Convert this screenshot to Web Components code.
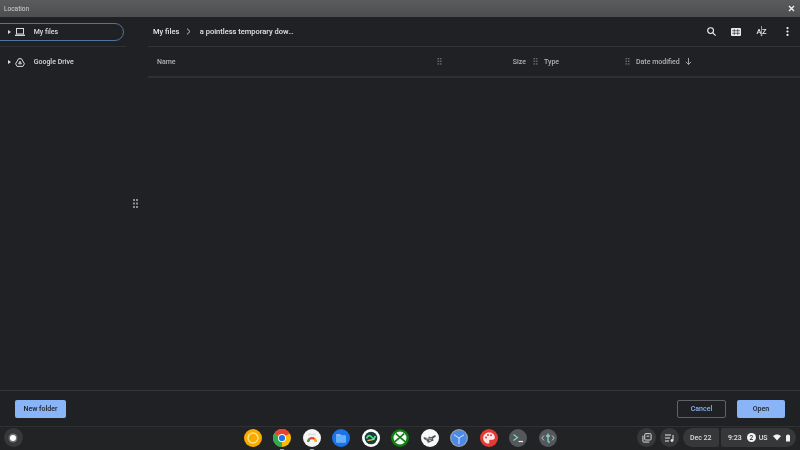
<!DOCTYPE html>
<html>
<head>
<meta charset="utf-8">
<title>Location</title>
<style>
    html, body { margin: 0; height: 100%; background: #202124; overflow: hidden; }
    /* the reference is a scaled down capture, slightly soft everywhere */
    body { display: flex; flex-direction: column; width: 800px; height: 450px; font-family: Roboto, "Liberation Sans", sans-serif; filter: blur(.3px); }
</style>
</head>
<body>
<file-dialog>
    <dialog-titlebar slot="title">Location</dialog-titlebar>
    <nav-tree slot="nav"></nav-tree>
    <file-toolbar slot="toolbar"></file-toolbar>
    <file-columns slot="columns"></file-columns>
    <dialog-footer slot="footer"></dialog-footer>
</file-dialog>
<chrome-shelf></chrome-shelf>

<script>
const gripDots = `<svg width="5" height="7" viewBox="0 0 5 7" fill="#65676b"><rect x=".5" y="0" width="1.6" height="1.4"/><rect x="2.900" y="0" width="1.6" height="1.4"/><rect x=".5" y="2.6" width="1.6" height="1.4"/><rect x="2.900" y="2.6" width="1.6" height="1.4"/><rect x=".5" y="5.2" width="1.6" height="1.4"/><rect x="2.900" y="5.2" width="1.6" height="1.4"/></svg>`

class FileDialog extends HTMLElement {
    constructor() {
        super()
        this.attachShadow({ mode: 'open' }).innerHTML = `
        <style>
            :host { display: flex; flex-direction: column; height: 426px; flex: none; background: #202124; }
            .main { flex: 1; display: flex; min-height: 0; }
            .side { width: 124px; flex: none; }
            .split { width: 24px; flex: none; box-sizing: border-box; padding-right: 2px; display: flex; align-items: center; justify-content: center; }
            .content { flex: 1; min-width: 0; display: flex; flex-direction: column; }
        </style>
        <slot name="title"></slot>
        <div class="main">
            <div class="side"><slot name="nav"></slot></div>
            <div class="split"><svg width="5" height="9" viewBox="0 0 5 9" fill="#8a8c8f"><rect width="2" height="2"/><rect x="3" width="2" height="2"/><rect y="3.500" width="2" height="2"/><rect x="3" y="3.500" width="2" height="2"/><rect y="7" width="2" height="2"/><rect x="3" y="7" width="2" height="2"/></svg></div>
            <div class="content">
                <slot name="toolbar"></slot>
                <slot name="columns"></slot>
            </div>
        </div>
        <slot name="footer"></slot>`
    }
}

class DialogTitlebar extends HTMLElement {
    constructor() {
        super()
        this.attachShadow({ mode: 'open' }).innerHTML = `
        <style>
            :host { display: flex; align-items: center; justify-content: space-between; height: 17px; flex: none;
                background: linear-gradient(#5a5b5c, #4d4e50); color: #d3d4d5; font-size: 6.5px; padding: 0 5px 0 4px; }
            svg { display: block; }
        </style>
        <span><slot></slot></span>
        <svg width="7" height="7" viewBox="0 0 7 7" stroke="#f1f3f4" stroke-width="1.3"><path d="M1 1 6 6M6 1 1 6"/></svg>`
    }
}

class NavTree extends HTMLElement {
    constructor() {
        super()
        this.attachShadow({ mode: 'open' }).innerHTML = `
        <style>
            :host { display: block; color: #dadbdd; font-size: 7px; font-weight: 500; }
            .row { height: 17px; display: flex; align-items: center; box-sizing: border-box; }
            .sel { height: 18px; margin-top: 6px; margin-left: -2px; border: 1px solid #51749f; border-radius: 0 10px 10px 0; padding-left: 8.5px; }
            .sep { height: 1px; background: #2f3033; margin: 5px -2px 0 0; }
            .drive { margin-top: 6.500px; padding-left: 7.500px; }
            .arrow { width: 0; height: 0; border-left: 3px solid #dadce0; border-top: 2.500px solid transparent; border-bottom: 2.500px solid transparent; margin-right: 4.500px; }
            svg { display: block; margin-right: 8.700px; flex: none; }
        </style>
        <div class="row sel"><i class="arrow"></i>
            <svg width="10" height="8" viewBox="0 0 10 8" fill="none" stroke="#dadce0"><rect x="1.500" y=".5" width="7" height="5.500"/><path d="M0 7.300h10" stroke-width="1.300"/></svg>
            <span>My files</span></div>
        <div class="sep"></div>
        <div class="row drive"><i class="arrow"></i>
            <svg width="10" height="9" viewBox="0 0 10 9" fill="none" stroke="#dadce0"><path d="M3.600.7h2.800l3 5.100-1.500 2.600H2.100L.6 5.800Z"/><path d="M5 3.200 6.400 5.800H3.600Z"/></svg>
            <span>Google Drive</span></div>`
    }
}

class FileToolbar extends HTMLElement {
    constructor() {
        super()
        this.attachShadow({ mode: 'open' }).innerHTML = `
        <style>
            :host { display: flex; align-items: center; height: 30px; flex: none; box-sizing: border-box; color: #e2e3e5; font-size: 7.5px; font-weight: 500; border-bottom: 1px solid #333438; padding: 0 11.500px 0 5px; }
            .chev { margin: 0 8.500px 0 7px; display: block; }
            .tools { margin-left: auto; display: flex; align-items: center; gap: 15.500px; }
            .az { position: relative; font-size: 7.5px; color: #e8eaed; width: 10px; text-align: center; letter-spacing: .6px; font-weight: 500; }
            .az svg { position: absolute; left: 3.600px; top: -1px; }
            .dots { margin-left: 3.500px; }
            svg { display: block; }
        </style>
        <span>My files</span>
        <svg class="chev" width="5" height="7" viewBox="0 0 5 7" fill="none" stroke="#c4c6c9"><path d="M1 .6 4 3.500 1 6.400"/></svg>
        <span>a pointless temporary dow…</span>
        <div class="tools">
            <svg width="9" height="9" viewBox="0 0 9 9" fill="none" stroke="#f1f3f4" stroke-width="1.100"><circle cx="3.600" cy="3.600" r="2.900"/><path d="M5.700 5.700 8.600 8.600"/></svg>
            <svg width="10" height="8" viewBox="0 0 10 8" fill="#e8eaed"><path d="M1 0h8a1 1 0 0 1 1 1v6a1 1 0 0 1-1 1H1a1 1 0 0 1-1-1V1a1 1 0 0 1 1-1Z"/><path d="M3.300 1v6M6.700 1v6M1 2.700h8M1 5.300h8" stroke="#202124" stroke-width=".6"/></svg>
            <span class="az">AZ<svg width="3" height="11" viewBox="0 0 3 11" fill="none" stroke="#e8eaed" stroke-width=".6"><path d="M1.500 0v10M.5 8.800l1 1.200 1-1.200"/></svg></span>
            <svg class="dots" width="3" height="9" viewBox="0 0 3 9" fill="#f1f3f4"><circle cx="1.500" cy="1.100" r="1.100"/><circle cx="1.500" cy="4.500" r="1.100"/><circle cx="1.500" cy="7.900" r="1.100"/></svg>
        </div>`
    }
}

class FileColumns extends HTMLElement {
    constructor() {
        super()
        this.attachShadow({ mode: 'open' }).innerHTML = `
        <style>
            :host { display: grid; grid-template-columns: 294px 96px 92px 1fr; height: 31px; flex: none; box-sizing: border-box;
                align-items: center; color: #b0b2b5; font-size: 7px; font-weight: 500; border-bottom: 2px solid #2f3033; }
            .c { display: flex; align-items: center; height: 100%; padding-right: .5px; }
            .name { padding-left: 9px; justify-content: space-between; }
            .size { justify-content: flex-end; gap: 6.500px; }
            .type { padding-left: 6px; justify-content: space-between; }
            .date { gap: 5px; padding-left: 6px; }
            svg { display: block; }
        </style>
        <div class="c name"><span>Name</span>${gripDots}</div>
        <div class="c size"><span>Size</span>${gripDots}</div>
        <div class="c type"><span>Type</span>${gripDots}</div>
        <div class="c date"><span>Date modified</span>
            <svg width="7" height="7" viewBox="0 0 7 8" fill="none" stroke="#b5b7ba"><path d="M3.500 0v7.400M.6 4.400l2.900 3 2.900-3"/></svg></div>`
    }
}

class DialogButton extends HTMLElement {
    constructor() {
        super()
        this.attachShadow({ mode: 'open' }).innerHTML = `
        <style>
            :host { display: flex; align-items: center; justify-content: center; width: 48px; height: 18px; box-sizing: border-box;
                border-radius: 2px; font-size: 7px; font-weight: 500; background: #8ab4f8; color: #202124; }
            :host([outline]) { background: transparent; color: #8ab4f8; border: 1px solid #5f6368; width: 49px; }
        </style>
        <slot></slot>`
    }
}

class DialogFooter extends HTMLElement {
    constructor() {
        super()
        this.attachShadow({ mode: 'open' }).innerHTML = `
        <style>
            :host { display: flex; align-items: center; gap: 11px; height: 36px; flex: none; box-sizing: border-box; border-top: 1px solid #35363a; padding: 0 15px; }
            .wide { width: 51px; }
            .push { margin-left: auto; }
        </style>
        <dialog-button class="wide">New folder</dialog-button>
        <dialog-button class="push" outline>Cancel</dialog-button>
        <dialog-button>Open</dialog-button>`
    }
}

const apps = [
    `<circle cx="9" cy="9" r="9" fill="#f9ab00"/><circle cx="9" cy="9" r="5" fill="#f9ab00" stroke="#fde293" stroke-width="1.400"/>`,
    `<circle cx="9" cy="9" r="9" fill="#fbbc04"/><path d="M9 9 1.200 4.500A9 9 0 0 1 16.800 4.500Z" fill="#ea4335"/><path d="M9 9 1.200 4.500A9 9 0 0 0 9 18Z" fill="#34a853"/><circle cx="9" cy="9" r="4" fill="#fff"/><circle cx="9" cy="9" r="3.100" fill="#1a73e8"/>`,
    `<circle cx="9" cy="9" r="9" fill="#f5f5f5"/><path d="M4 13a5 5 0 0 1 10 0h-2.200a2.800 2.800 0 0 0-5.600 0Z" fill="#ea4335"/><path d="M4 13a5 5 0 0 1 2-4l1.200 2a2.800 2.800 0 0 0-1 2Z" fill="#34a853"/><path d="M14 13a5 5 0 0 0-2-4l-1.200 2a2.800 2.800 0 0 1 1 2Z" fill="#fbbc04"/><rect x="5" y="4.500" width="8" height="2" fill="#e0e0e0"/>`,
    `<circle cx="9" cy="9" r="9" fill="#1a73e8"/><path d="M4 6a1 1 0 0 1 1-1h3l1.200 1.300H13a1 1 0 0 1 1 1V12.500a1 1 0 0 1-1 1H5a1 1 0 0 1-1-1Z" fill="#8ab4f8"/><rect x="4" y="7" width="10" height="6.500" rx="1" fill="#64b0f9"/>`,
    `<circle cx="9" cy="9" r="9" fill="#fff"/><circle cx="9" cy="9" r="6.300" fill="#1c3b37"/><path d="M4.500 9.500C6 6 8 6 9.500 8S12 10 13.500 7" fill="none" stroke="#3ddc84" stroke-width="1.800"/><path d="M5.500 11.500C7.500 11 10 11.500 12.500 10" fill="none" stroke="#fdd663" stroke-width="1.200"/>`,
    `<circle cx="9" cy="9" r="9" fill="#107c10"/><circle cx="9" cy="9" r="6.500" fill="#f4f4f4"/><path d="M4.800 4.600 9 8.300 13.200 4.600M3.600 12.800 9 8.300l5.400 4.500" fill="none" stroke="#107c10" stroke-width="1.600"/>`,
    `<circle cx="9" cy="9" r="9" fill="#f8f8f8"/><path d="M2.500 8 7 9.200l1-1.800 2 .8 4-2.200 1 1.600-3 1.800.5 2.400-2.500.6L7 14l-1-2.200-3-1.800Z" fill="#55575a"/><path d="M5 9.800h6M8 11.500h2" stroke="#fff" stroke-width=".6"/>`,
    `<circle cx="9" cy="9" r="9" fill="#9aa0a6"/><circle cx="9" cy="9" r="7.800" fill="#4d8ae8"/><path d="M9 9V15M9 9 4 5.800M9 9l5-3.200" stroke="#e8f0fe" stroke-width=".9"/>`,
    `<circle cx="9" cy="9" r="9" fill="#e53935"/><path d="M9 3.500C5.500 3.500 3.200 6 3.200 9c0 3 2.300 5.500 5 5.500 1.500 0 1.400-1.200 1-2-.4-1 .3-1.700 1.300-1.700h2c1.300 0 2.300-1 2.300-2.300C14.800 5.500 12.300 3.500 9 3.500Z" fill="#fce8e6"/><circle cx="6" cy="8.500" r="1" fill="#e53935"/><circle cx="8" cy="6" r="1" fill="#e53935"/><circle cx="11" cy="6.200" r="1" fill="#e53935"/>`,
    `<circle cx="9" cy="9" r="9" fill="#54575b"/><path d="M4.500 5.500 8.500 8.500 4.500 11.500" fill="none" stroke="#78d9a8" stroke-width="1.300"/><path d="M9.500 12.500h4.500" stroke="#f1f3f4" stroke-width="1.200"/>`,
    `<circle cx="9" cy="9" r="9" fill="#54575b"/><path d="M5 6.500 2.800 9 5 11.500M13 6.500 15.200 9 13 11.500" fill="none" stroke="#c4c7c5" stroke-width="1"/><path d="M9 4.500v7.500a1.200 1.200 0 0 0 1.200 1.200H11M7 7h4" fill="none" stroke="#7fdcc0" stroke-width="1.300"/>`
]

class ChromeShelf extends HTMLElement {
    constructor() {
        super()
        // 2nd and 3rd apps have the little running dot underneath
        const icons = apps.map((a, i) => `<span class="app${i == 1 || i == 2 ? ' on' : ''}"><svg width="18" height="18" viewBox="0 0 18 18">${a}</svg></span>`).join('')
        this.attachShadow({ mode: 'open' }).innerHTML = `
        <style>
            :host { display: flex; align-items: center; height: 24px; flex: none; position: relative; background: #222324; box-shadow: inset 0 1px #2f3032; box-sizing: border-box; color: #e3e4e6; font-size: 7px; font-weight: 500; padding: 0 4px 1px 3.500px; }
            svg { display: block; }
            .launcher { width: 19px; height: 19px; border-radius: 50%; background: #37383a; display: flex; align-items: center; justify-content: center; }
            .launcher i { width: 6px; height: 6px; background: #fff; border-radius: 50%; box-shadow: 0 0 0 1.500px #717274; }
            .apps { position: absolute; left: 243.500px; top: 3px; display: flex; gap: 11.500px; }
            .app { position: relative; display: block; width: 18px; height: 18px; }
            .on::after { content: ""; position: absolute; left: 7px; bottom: -2.500px; width: 4px; height: 1px; background: #9aa0a6; }
            .tray { margin-left: auto; display: flex; align-items: center; }
            .round { width: 19px; height: 19px; margin-right: 4px; border-radius: 50%; background: #37383a; display: flex; align-items: center; justify-content: center; }
            .pod { height: 19px; display: flex; align-items: center; background: #37383a; box-sizing: border-box; }
            .date { width: 35.500px; justify-content: center; border-radius: 10px 2px 2px 10px; color: #dcdddf; }
            .status { width: 75px; margin-left: 2.500px; padding: 0 0 0 7px; border-radius: 2px 10px 10px 2px; }
            .status .g5 { margin-left: 5px; }
            .status .g3 { margin-left: 3px; }
            .badge { width: 9px; height: 9px; border-radius: 50%; background: #f1f3f4; color: #202124; font-size: 6.500px; display: flex; align-items: center; justify-content: center; }
        </style>
        <div class="launcher"><i></i></div>
        <div class="apps">${icons}</div>
        <div class="tray">
            <div class="round"><svg width="10" height="10" viewBox="0 0 11 11" fill="none" stroke="#e8eaed"><rect x="3" y=".7" width="7" height="7" rx="1"/><path d="M1 3v6a1 1 0 0 0 1 1h6"/><path d="M5 3.500h3"/></svg></div>
            <div class="round"><svg width="10" height="8" viewBox="0 0 10 8" fill="none" stroke="#e8eaed"><path d="M0 1h6M0 4h5M0 7h4M8 1v5"/><circle cx="7" cy="6.500" r="1" fill="#e8eaed"/></svg></div>
            <div class="pod date">Dec 22</div>
            <div class="pod status"><span>9:23</span><span class="badge g5">2</span><span class="g3">US</span>
                <svg class="g5" width="8" height="7" viewBox="0 0 9 7" fill="#f1f3f4"><path d="M0 1.800C2.500-.6 6.500-.6 9 1.800L4.500 7Z"/></svg>
                <svg class="g5" width="4" height="8" viewBox="0 0 5 9" fill="#f1f3f4"><path d="M1.500 0h2v1H5v8H0V1h1.500Z"/></svg>
            </div>
        </div>`
    }
}

customElements.define('dialog-button', DialogButton)
customElements.define('file-dialog', FileDialog)
customElements.define('dialog-titlebar', DialogTitlebar)
customElements.define('nav-tree', NavTree)
customElements.define('file-toolbar', FileToolbar)
customElements.define('file-columns', FileColumns)
customElements.define('dialog-footer', DialogFooter)
customElements.define('chrome-shelf', ChromeShelf)
</script>
</body>
</html>
